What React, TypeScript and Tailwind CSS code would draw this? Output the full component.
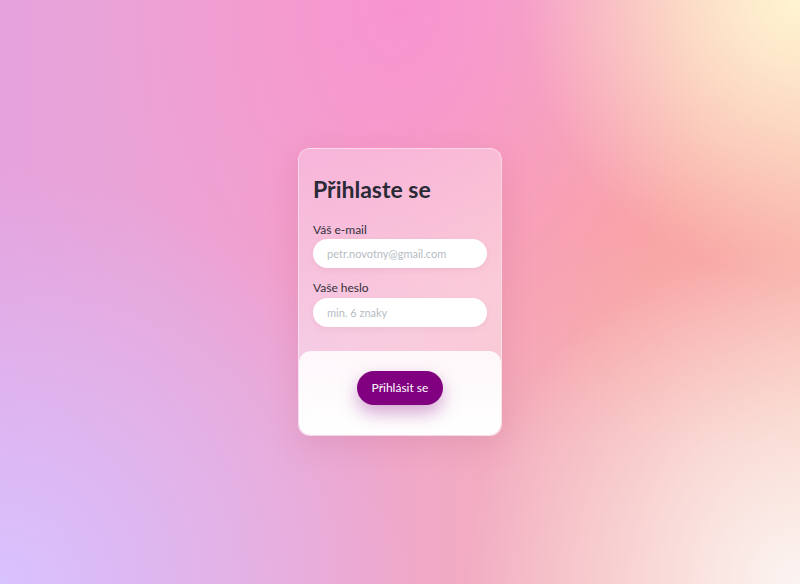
export default function App() {
  return (
    <div
      className="h-[584px] w-full flex items-center justify-center bg-[radial-gradient(circle_at_100%_0%,#fff4d2_0%,transparent_28%),radial-gradient(circle_at_100%_100%,#fbf4f2_0%,transparent_34%),radial-gradient(circle_at_0%_100%,#d8c2ff_0%,transparent_42%),radial-gradient(ellipse_at_50%_0%,#f894d0_0%,transparent_55%),radial-gradient(ellipse_at_80%_38%,#f9a4a4_0%,transparent_45%),linear-gradient(to_right,#e6a2dc,#efa6cc_45%,#f6b4b4_80%,#f9c4b4)]"
      style={{ fontFamily: "Lato, 'Open Sans', sans-serif" }}
    >
      <div className="w-[204px] rounded-xl border border-white/40 bg-[linear-gradient(160deg,rgba(255,255,255,0.25),rgba(255,255,255,0.45)_60%,rgba(255,255,255,0.35))] shadow-[0_10px_30px_rgba(160,60,90,0.15)] overflow-hidden">
        <div className="px-[14px] pt-[27px] pb-[24px]">
          <h1 className="text-[23px] leading-[26px] font-bold text-[#2a2a36]">Přihlaste se</h1>
          <label className="block mt-[20px] text-[12px] leading-[15px] text-[#33303a]">Váš e-mail</label>
          <input
            className="mt-[2px] w-full h-[29px] rounded-full bg-white px-[14px] text-[11px] outline-none placeholder:text-[#b6bcc4] shadow-[0_2px_6px_rgba(150,60,90,0.08)]"
            placeholder="petr.novotny@gmail.com"
          />
          <label className="block mt-[12px] text-[12px] leading-[15px] text-[#33303a]">Vaše heslo</label>
          <input
            type="password"
            className="mt-[3px] w-full h-[29px] rounded-full bg-white px-[14px] text-[11px] outline-none placeholder:text-[#b6bcc4] shadow-[0_2px_6px_rgba(150,60,90,0.08)]"
            placeholder="min. 6 znaky"
          />
        </div>
        <div className="h-[84px] pt-[20px] rounded-xl bg-[linear-gradient(to_bottom,rgba(255,255,255,0.85),#ffffff)] flex items-start justify-center">
          <button className="w-[86px] h-[34px] rounded-full bg-[#800080] text-white text-[12px] shadow-[0_8px_18px_rgba(128,0,128,0.35)]">
            Přihlásit se
          </button>
        </div>
      </div>
    </div>
  );
}
